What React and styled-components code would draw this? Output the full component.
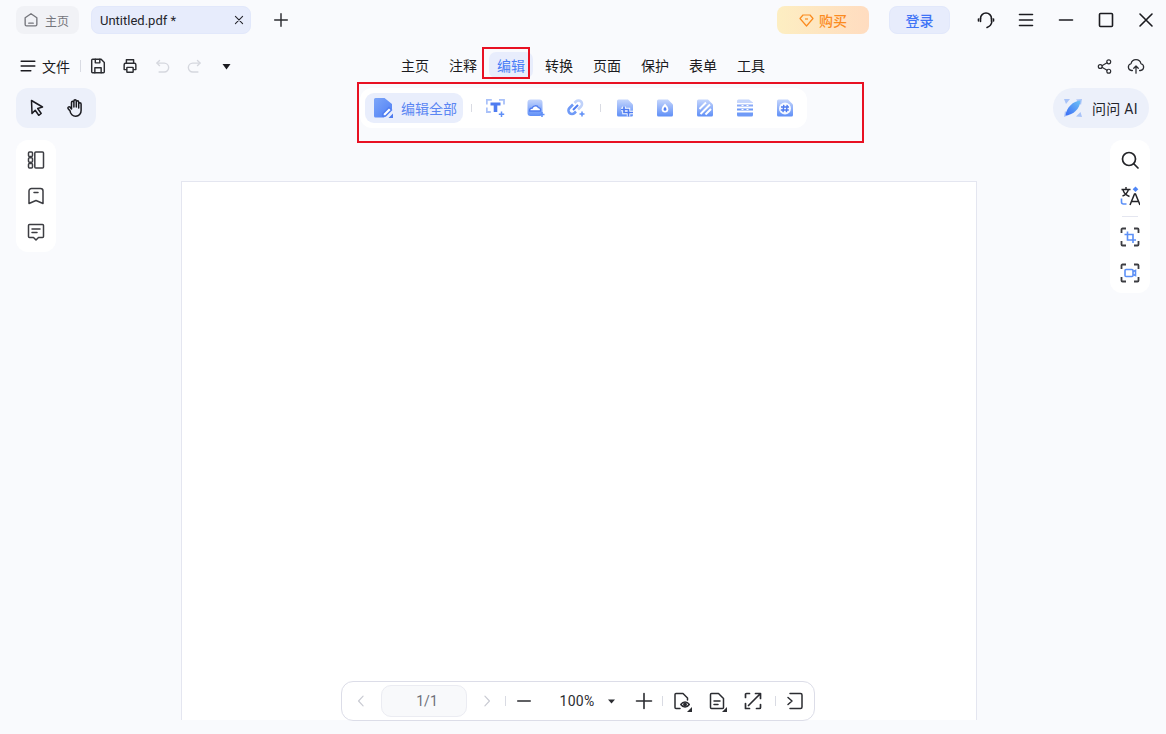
import React from "react";
import styled, { createGlobalStyle } from "styled-components";

const Global = createGlobalStyle`
  html, body { margin: 0; padding: 0; height: 100%; }
  body { background: #f9fafd; font-family: Roboto, "Noto Sans CJK SC", sans-serif; color: #1b1b20; overflow: hidden; }
  * { box-sizing: border-box; }
`;

const Shell = styled.div`
  width: 1166px; height: 734px; display: flex; flex-direction: column; position: relative; overflow: hidden;
`;
const TitleBar = styled.header`
  height: 40px; padding: 6px 0 0 16px; display: flex; align-items: flex-start; flex: none;
`;
const HomeTab = styled.div`
  width: 63px; height: 28px; border-radius: 8px; background: #f1f2f6; display: flex; align-items: center; padding-left: 6px; gap: 5px;
  font-size: 12px; color: #75767c; margin-right: 12px;
`;
const DocTab = styled.div`
  width: 160px; height: 28px; border-radius: 8px; background: #e7ecfc; border: 1px solid #e2e8fb; display: flex; align-items: center;
  padding: 0 5px 0 8px; justify-content: space-between; font-size: 13px; color: #24252b; margin-right: 20px;
`;
const Plain = styled.button`
  width: ${p => p.$w || 20}px; height: ${p => p.$h || 20}px; border: 0; background: none; padding: 0; display: flex; align-items: center; justify-content: center; flex: none;
  margin: 0 ${p => p.$mr || 0}px 0 ${p => p.$ml || 0}px; color: ${p => p.$c || "#2b2c31"};
`;
const Grow = styled.div` flex: 1; `;
const Buy = styled.button`
  width: 92px; height: 28px; border: 0; border-radius: 8px; background: linear-gradient(90deg, #fdeec2, #ffdcc0);
  color: #fb8b1f; font: 500 14px "Noto Sans CJK SC", sans-serif; display: flex; align-items: center; justify-content: center; gap: 5px; margin-right: 20px; padding: 0;
`;
const Login = styled.button`
  width: 61px; height: 28px; border: 1px solid #e2e8fb; border-radius: 8px; background: #e7ecfc; color: #3f74f6;
  font: 500 14px "Noto Sans CJK SC", sans-serif; padding: 0; margin-right: 26px;
`;
const WinIcons = styled.div`
  display: flex; gap: 20px; padding-right: 10px; height: 28px; align-items: center;
`;
const MenuRow = styled.div`
  height: 48px; position: relative; flex: none; display: flex; align-items: center; padding: 4px 16px 0 20px;
`;
const FileMenu = styled.div`
  display: flex; align-items: center; gap: 6px; font-size: 14px; color: #1b1b20; width: 51px; 
`;
const Sep = styled.i`
  width: 1px; height: ${p => p.$h || 12}px; background: #d9dbe3; flex: none; display: block; margin: ${p => p.$m || "0"};
`;
const QuickIcons = styled.div`
  display: flex; align-items: center; gap: 12px; margin-left: 7px;
`;
const Nav = styled.nav`
  position: absolute; left: 393px; top: 4px; height: 42px; display: flex; align-items: center; gap: 4px;
`;
const NavItem = styled.div`
  width: 44px; height: 26px; border-radius: 7px; display: flex; align-items: center; justify-content: center; position: relative;
  font-size: 14px; background: ${p => p.$on ? "#e8edfc" : "transparent"}; color: ${p => p.$on ? "#4a7df6" : "#1b1b20"};
`;
const RedBox = styled.div`
  position: absolute; border: 2px solid #e81123; pointer-events: none;
`;
const NavRed = styled(RedBox)` left: -7px; top: -5px; width: 48px; height: 32px; `;
const ToolRed = styled(RedBox)` left: -3px; top: -6px; width: 507px; height: 61px; `;
const Right = styled.div` margin-left: auto; display: flex; gap: 13px; align-items: center; padding-right: 4px; `;
const ToolRow = styled.div`
  height: 40px; display: flex; align-items: center; padding: 0 17px 0 16px; flex: none; justify-content: space-between;
`;
const ToolGroup = styled.div`
  width: 80px; height: 40px; background: #ecf0fa; border-radius: 12px; display: flex; align-items: center; justify-content: center; gap: 18px;
`;
const Ribbon = styled.div`
  position: absolute; left: 360px; top: 88px; width: 447px; height: 40px; background: #fff; border-radius: 12px; display: flex; align-items: center; padding-left: 5px;
`;
const EditAll = styled.div`
  width: 98px; height: 30px; border-radius: 9px; background: #e9eefc; display: flex; align-items: center; padding-left: 8px; gap: 8px; font-size: 14px; color: #5b86f3; margin-right: 8px; white-space: nowrap;
`;
const RibbonBtn = styled.div`
  width: 20px; height: 20px; display: flex; align-items: center; justify-content: center; flex: none; margin-left: ${p => p.$ml ?? 20}px;
`;
const AskAI = styled.div`
  width: 96px; height: 40px; border-radius: 20px; background: #ecf0fa; display: flex; align-items: center; padding-left: 10px; gap: 9px; font-size: 14px; letter-spacing: .3px; color: #24252b;
`;
const Body = styled.main`
  flex: 1; display: grid; grid-template-columns: 165px 796px 1fr; padding: 12px 16px 14px; min-height: 0;
`;
const Rail = styled.aside`
  width: 40px; background: #fff; border-radius: 12px; display: flex; flex-direction: column; align-items: center; gap: 16px; padding: 10px 0; align-self: start; justify-self: ${p => p.$end ? "end" : "start"};
`;
const RailRule = styled.i` width: 16px; height: 1px; background: #e4e6f0; display: block; margin: -6px 0; `;
const Paper = styled.section`
  margin-top: 41px; background: #fff; border: 1px solid #e4e6f0; border-bottom: 0;
`;
const Zoombar = styled.footer`
  position: absolute; left: 341px; top: 681px; width: 474px; height: 40px; background: #fff; border: 1px solid #dcdde8; border-radius: 12px;
  display: flex; align-items: center; padding-left: 12px; font-size: 14px; color: #2b2c31;
`;
const PageBox = styled.div`
  width: 86px; height: 32px; margin: 0 13px; padding-left: 6px; background: #f8f9fb; border: 1px solid #ebecf2; border-radius: 10px; display: flex; align-items: center; justify-content: center; color: #6d7078; font-size: 14px;
`;
const Percent = styled.span` width: 38px; margin-left: 24px; text-align: center; white-space: nowrap; letter-spacing: .3px; `;

const S = ({ s = 20, children, sw = 1.6, c = "currentColor" }) => (
  <svg width={s} height={s} viewBox="0 0 20 20" fill="none" stroke={c} strokeWidth={sw} strokeLinecap="round" strokeLinejoin="round">{children}</svg>
);

const Grad = () => (
  <svg width="0" height="0" style={{ position: "absolute" }}>
    <defs>
      <linearGradient id="bg" x1="0" y1="0" x2="0" y2="1"><stop offset="0" stopColor="#c6d6fc" /><stop offset="1" stopColor="#5f8ff7" /></linearGradient>
      <linearGradient id="ed" x1="0" y1="0" x2="1" y2="1"><stop offset="0" stopColor="#7da6f9" /><stop offset="1" stopColor="#4f7ff5" /></linearGradient>
      <linearGradient id="ai" x1="0" y1="1" x2="1" y2="0"><stop offset="0" stopColor="#3b6cf6" /><stop offset="1" stopColor="#6fc3f5" /></linearGradient>
    </defs>
  </svg>
);

const Sheet = ({ children }) => (
  <svg width="20" height="20" viewBox="0 0 20 20" fill="none">
    <path d="M3.500 1.500h9.500L18 6.500V17a1.500 1.500 0 0 1-1.500 1.500h-13A1.500 1.500 0 0 1 2 17V3a1.500 1.500 0 0 1 1.500-1.500z" fill="url(#bg)" />
    {children}
  </svg>
);

const Corner = () => <svg width="5" height="5" viewBox="0 0 5 5" style={{ position: "absolute", right: 0, bottom: 0 }}><path d="M5 0v5H0z" fill="#2b2c31" /></svg>;
const Tagged = styled.span` position: relative; display: flex; width: 22px; height: 22px; align-items: center; justify-content: center; `;

export default function App() {
  return (
    <Shell>
      <Global />
      <Grad />
      <TitleBar>
        <HomeTab>
          <S s={18} sw={1.500}><path d="M3.500 7.500 10 3l6.500 4.500V15a1.500 1.500 0 0 1-1.500 1.500H5A1.500 1.500 0 0 1 3.500 15z" /><path d="M7.500 13.500h5" /></S>
          主页
        </HomeTab>
        <DocTab>
          <span>Untitled.pdf *</span>
          <S s={12} sw={1.800}><path d="M4 4l12 12M16 4 4 16" /></S>
        </DocTab>
        <Plain $h={28}><S s={18}><path d="M10 3v14M3 10h14" /></S></Plain>
        <Grow />
        <Buy>
          <svg width="15" height="13" viewBox="0 0 15 13" fill="none" stroke="#fb8b1f" strokeWidth="1.200" strokeLinejoin="round"><path d="M4 1h7l3 3.500-6.500 7.500L1 4.500z" /><path d="M6 5h3" /></svg>
          购买
        </Buy>
        <Login>登录</Login>
        <WinIcons>
          <S sw={1.600}><path d="M4.500 8.500a5.500 5.500 0 0 1 11 0" /><path d="M15.800 12c-.4 2.600-2.200 4.500-4.800 5.500" /><path d="M4.500 8.500v3M15.500 8.500v3" sw="2" /><path d="M2.500 9v2M17.500 9v2" /></S>
          <S><path d="M3.500 4.500h13M3.500 10h13M3.500 15.500h13" /></S>
          <S><path d="M3.500 10h13" /></S>
          <S><rect x="3.500" y="3.500" width="13" height="13" rx="1" /></S>
          <S><path d="M4 4l12 12M16 4 4 16" /></S>
        </WinIcons>
      </TitleBar>

      <MenuRow>
        <FileMenu>
          <S s={16} sw={1.900}><path d="M1.500 4h17M1.500 10h17M1.500 16h12" /></S>
          文件
        </FileMenu>
        <Sep $m="0 0 0 9px" />
        <QuickIcons>
          <Plain><S s={18}><path d="M4 2.500h9.500L17 6v10.500a1 1 0 0 1-1 1H4a1 1 0 0 1-1-1v-13a1 1 0 0 1 1-1z" /><path d="M7 2.500v4h5v-4M6.500 17.500v-5.500h7v5.500" /></S></Plain>
          <Plain><S s={18}><path d="M6 7V3h8v4M6 14H3.500V8.500A1.500 1.500 0 0 1 5 7h10a1.500 1.500 0 0 1 1.500 1.500V14H14" /><rect x="6.500" y="11.500" width="7" height="5.500" rx=".5" /></S></Plain>
          <Plain $c="#d5d7de"><S s={17}><path d="M6.500 3 3.500 6l3 3" /><path d="M3.500 6H12a4.500 4.500 0 0 1 0 10.500H6" /></S></Plain>
          <Plain $c="#d5d7de"><S s={17}><path d="M13.500 3l3 3-3 3" /><path d="M16.500 6H8a4.500 4.500 0 0 0 0 10.500h6" /></S></Plain>
          <Plain><svg width="9" height="7" viewBox="0 0 9 7"><path d="M.5 1h8L4.500 6.500z" fill="#1b1b20" /></svg></Plain>
        </QuickIcons>
        <Nav>
          <NavItem>主页</NavItem>
          <NavItem>注释</NavItem>
          <NavItem $on>编辑<NavRed /></NavItem>
          <NavItem>转换</NavItem>
          <NavItem>页面</NavItem>
          <NavItem>保护</NavItem>
          <NavItem>表单</NavItem>
          <NavItem>工具</NavItem>
        </Nav>
        <Right>
          <Plain $w={18}><S s={17} sw={1.400}><circle cx="15" cy="4.500" r="2.300" /><circle cx="15" cy="15.500" r="2.300" /><circle cx="5" cy="10" r="2.300" /><path d="M7 9l6-3.500M7 11l6 3.500" /></S></Plain>
          <Plain $w={20}><S s={18} sw={1.400}><path d="M6 15H5a3.800 3.800 0 0 1-.5-7.500A5.600 5.600 0 0 1 15.500 7.500 3.800 3.800 0 0 1 15 15h-1" /><path d="M10 18v-8M7.500 12.500 10 10l2.500 2.500" /></S></Plain>
        </Right>
      </MenuRow>

      <ToolRow>
        <ToolGroup>
          <S s={20} sw={1.500}><path d="M4.500 2.500 15.500 9l-4.800 1.500 3.500 5-2.500 1.800-3.500-5L5 15.500z" /></S>
          <S s={20} sw={1.500}><path d="M6.500 11V4.500a1.200 1.200 0 0 1 2.400 0V9M8.900 9V3a1.200 1.200 0 0 1 2.400 0v6M11.300 9V4a1.200 1.200 0 0 1 2.400 0v6M13.700 10V6a1.200 1.200 0 0 1 2.400 0v6.500a5.500 5.500 0 0 1-11 .5L3 10.500a1.300 1.300 0 0 1 2-1.500l1.500 2" /></S>
        </ToolGroup>
        <AskAI>
          <svg width="20" height="20" viewBox="0 0 20 20"><path d="M1 1h6L3 6zM13 1.500 19 1l-1 6zM1 19l1-6 4 4zM19 19l-6-.5 4.500-4.500z" fill="#a9c3f8" /><path d="M17.500 2.500C10 3 3.500 9.500 2.500 17.500c8-.5 14.500-7 15-15z" fill="url(#ai)" /></svg>
          问问 AI
        </AskAI>
      </ToolRow>

      <Ribbon>
        <ToolRed />
        <EditAll>
          <svg width="20" height="20" viewBox="0 0 20 20">
            <path d="M2.500 0h9L19 6v5l-8 8.500H2.500A1.500 1.500 0 0 1 1 18V1.500A1.500 1.500 0 0 1 2.500 0z" fill="url(#ed)" />
            <path d="M10 15.500l6-6 2.500 2.500-6 6H10z" fill="#fff" stroke="#4f7cf0" strokeWidth="1.400" />
            <path d="M20 15.500V20h-4.500z" fill="#4f7cf0" />
          </svg>
          编辑全部
        </EditAll>
        <Sep $h={8} />
        <RibbonBtn $ml={14}>
          <svg width="20" height="20" viewBox="0 0 20 20" fill="none">
            <path d="M.8 6.500V1.800h5M13 1.800h5v4.700M.8 9.500v4.500h4" stroke="#a9c1f9" strokeWidth="1.800" />
            <path d="M4.500 4.500h10v3h-3.200V14H7.700V7.500H4.500z" fill="#4f7cf0" />
            <path d="M15.500 13.500v5.500M12.800 16.200h5.400" stroke="#5f8ff7" strokeWidth="1.500" />
          </svg>
        </RibbonBtn>
        <RibbonBtn>
          <svg width="20" height="20" viewBox="0 0 20 20" fill="none">
            <rect x="1.500" y="1.500" width="15" height="16.500" rx="3" fill="url(#bg)" />
            <path d="M3.500 13c0-2 1.200-3 2.800-3 .7-2.800 5-3 6-.4 1.800 0 2.700 1.700 2 3.400z" fill="#fff" stroke="#4f7cf0" strokeWidth="1.300" />
            <path d="M16 14v5M13.500 16.500h5" stroke="#5f8ff7" strokeWidth="1.500" />
          </svg>
        </RibbonBtn>
        <RibbonBtn>
          <svg width="20" height="20" viewBox="0 0 20 20" fill="none">
            <path d="M7 6.500 3.500 10a3.500 3.500 0 0 0 5 5L10 13.500" stroke="#6f9af7" strokeWidth="2.600" />
            <path d="M8.500 5 10 3.500a3.500 3.500 0 0 1 5 5L12 11.500" stroke="#c0d2fa" strokeWidth="2.600" />
            <path d="M7 12l5-5" stroke="#4f7cf0" strokeWidth="2" />
            <path d="M16 13.500v5M13.500 16h5" stroke="#5f8ff7" strokeWidth="1.500" />
          </svg>
        </RibbonBtn>
        <Sep $h={8} $m="0 0 0 14px" />
        <RibbonBtn $ml={14}>
          <Sheet>
            <path d="M9 8.500v6h9M6 11.500h7.500V18.500" stroke="#fff" strokeWidth="3.400" />
            <path d="M9 8.500v6h9M6 11.500h7.500V18.500" stroke="#4f7cf0" strokeWidth="1.700" />
          </Sheet>
        </RibbonBtn>
        <RibbonBtn>
          <Sheet><path d="M10 5.500c2 2.400 3.300 4 3.300 5.800a3.300 3.300 0 0 1-6.600 0c0-1.800 1.300-3.400 3.300-5.800z" fill="#fff" /><path d="M10 8.700c.9 1.100 1.500 1.800 1.500 2.600a1.500 1.500 0 0 1-3 0c0-.8.600-1.500 1.500-2.600z" fill="#4f7cf0" /></Sheet>
        </RibbonBtn>
        <RibbonBtn>
          <Sheet><path d="M4.500 11 11 4.500M5.500 16 15 6.500M10.500 16.500 16 11" stroke="#fff" strokeWidth="2" /></Sheet>
        </RibbonBtn>
        <RibbonBtn>
          <svg width="20" height="20" viewBox="0 0 20 20">
            <path d="M2 3a1.500 1.500 0 0 1 1.500-1.500H14L18 4.500V5H2z" fill="#c6d6fc" />
            <rect x="2" y="6.500" width="16" height="2" fill="#8aaaf8" />
            <path d="M2 10.500h16v2H2zM2 14.500h16V17a1.500 1.500 0 0 1-1.500 1.500h-13A1.500 1.500 0 0 1 2 17z" fill="#6f9af7" />
            <path d="M6.500 7.500h2M11.500 7.500h2M6.500 11.500h2M11.500 11.500h2" stroke="#fff" />
          </svg>
        </RibbonBtn>
        <RibbonBtn>
          <Sheet><circle cx="10" cy="10.500" r="6" fill="#fff" opacity=".92" /><path d="M8.800 6.800 8 14.200M12.200 6.800l-.8 7.400M6 9h8M5.800 12h8" stroke="#4f7cf0" strokeWidth="1.400" /></Sheet>
        </RibbonBtn>
      </Ribbon>

      <Body>
        <Rail>
          <S s={20} sw={1.500} c="#3c3d42"><rect x="2.500" y="2" width="4" height="4.500" rx="1" /><rect x="2.500" y="7.800" width="4" height="4.500" rx="1" /><rect x="2.500" y="13.500" width="4" height="4.500" rx="1" /><rect x="8.800" y="2" width="8.700" height="16" rx="1" /></S>
          <S s={20} sw={1.500} c="#3c3d42"><path d="M3 5a2.500 2.500 0 0 1 2.500-2.500h9A2.500 2.500 0 0 1 17 5v12.500l-7-3-7 3z" /><path d="M8 6.500h4" /></S>
          <S s={20} sw={1.500} c="#3c3d42"><path d="M3.500 2.500h13a1 1 0 0 1 1 1v11a1 1 0 0 1-1 1h-4L10 18l-2.500-2.500h-4a1 1 0 0 1-1-1v-11a1 1 0 0 1 1-1z" /><path d="M6 7h8M6 10.500h5" /></S>
        </Rail>
        <Paper />
        <Rail $end>
          <S s={20} sw={1.700} c="#232428"><circle cx="9" cy="9" r="6.500" /><path d="M14 14l4 4" /></S>
          <svg width="20" height="20" viewBox="0 0 20 20" fill="none">
            <path d="M1.500 3.500h9M6 1v2.500M2.500 10c3-1 5-3.500 6-6.500M3 4c1 3 3.500 5.500 6.500 6.500" stroke="#232428" strokeWidth="1.400" />
            <path d="M15.500 .5l2.800 2.800-2.800 2.800-2.800-2.800z" fill="#4f86f7" />
            <path d="M1.500 12.500v3.500a2 2 0 0 0 2 2h3" stroke="#5c90f7" strokeWidth="1.600" />
            <path d="M10 19 14.500 8h1L20 19M11.500 15.500h7" stroke="#232428" strokeWidth="1.500" />
          </svg>
          <RailRule />
          <svg width="20" height="20" viewBox="0 0 20 20" fill="none">
            <path d="M1.500 6V2.500a1 1 0 0 1 1-1H6M14 1.500h3.500a1 1 0 0 1 1 1V6M18.500 14v3.500a1 1 0 0 1-1 1H14M6 18.500H2.500a1 1 0 0 1-1-1V14" stroke="#3c3d42" strokeWidth="1.800" />
            <path d="M7.500 4.500V13H16M4.500 7.500H13V16" stroke="#5c90f7" strokeWidth="1.600" />
          </svg>
          <svg width="20" height="20" viewBox="0 0 20 20" fill="none">
            <path d="M1.500 6V2.500a1 1 0 0 1 1-1H6M14 1.500h3.500a1 1 0 0 1 1 1V6M18.500 14v3.500a1 1 0 0 1-1 1H14M6 18.500H2.500a1 1 0 0 1-1-1V14" stroke="#3c3d42" strokeWidth="1.800" />
            <rect x="5" y="6.500" width="8" height="7" rx="1" stroke="#5c90f7" strokeWidth="1.600" />
            <path d="M13 8.500 15.500 7.500v5L13 11.500" stroke="#5c90f7" strokeWidth="1.600" />
          </svg>
        </Rail>
      </Body>

      <Zoombar>
        <Plain $c="#c8cad2" $w={14}><S s={20}><path d="M13 3 6.500 10l6.500 7" /></S></Plain>
        <PageBox>1/1</PageBox>
        <Plain $c="#c8cad2" $w={14}><S s={20}><path d="M7 3l6.500 7L7 17" /></S></Plain>
        <Sep $h={10} $m="0 0 0 11px" />
        <Plain $w={20} $ml={8}><S s={18}><path d="M3 10h14" /></S></Plain>
        <Percent>100%</Percent>
        <Plain $w={30}><svg width="7" height="5" viewBox="0 0 7 5"><path d="M0 .5h7L3.500 4.500z" fill="#2b2c31" /></svg></Plain>
        <Plain $w={20} $ml={8}><S s={20}><path d="M10 2.500v15M2.500 10h15" /></S></Plain>
        <Sep $h={10} $m="0 0 0 8px" />
        <Plain $w={20} $h={22} $ml={9} $mr={15}><Tagged><S s={20} sw={1.500}><path d="M8 17.500H4a1 1 0 0 1-1-1v-13a1 1 0 0 1 1-1h7l4.500 4.500v2" /><circle cx="13" cy="13.500" r="1.200" fill="currentColor" /><path d="M8.800 13.500c2.300-3.300 6.200-3.300 8.500 0-2.300 3.300-6.200 3.300-8.500 0z" /></S><Corner /></Tagged></Plain>
        <Plain $w={20} $h={22} $mr={16}><Tagged><S s={20} sw={1.500}><path d="M4.500 2.500h7l5 5v9a1 1 0 0 1-1 1h-11a1 1 0 0 1-1-1v-13a1 1 0 0 1 1-1z" /><path d="M7 10h6M7 13.500h4" /></S><Corner /></Tagged></Plain>
        <Plain $w={20} $mr={12}><S s={20} sw={1.700}><path d="M6.500 2.500h-3a1 1 0 0 0-1 1v3M12.500 2.500h5v5M6.500 17.500H2.500v-5M13.500 17.500h3a1 1 0 0 0 1-1v-3M5.500 14.500l11-11" /></S></Plain>
        <Sep $h={10} />
        <Plain $w={20} $ml={9}><S s={20} sw={1.500}><path d="M5 2.500h10.500A1.500 1.500 0 0 1 17 4v12a1.500 1.500 0 0 1-1.500 1.500H5M3 6.500l4 3.500-4 3.500" /></S></Plain>
      </Zoombar>
    </Shell>
  );
}
